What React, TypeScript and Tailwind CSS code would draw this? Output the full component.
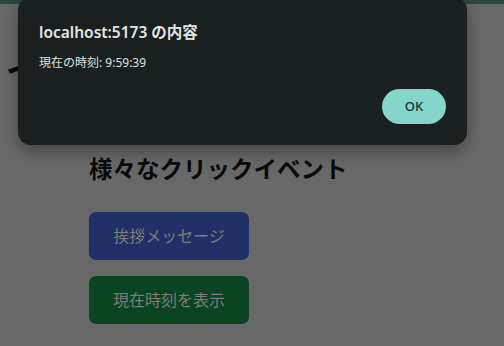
export default function App() {
  return (
    <div
      className="relative h-[346px] w-[504px] overflow-hidden bg-[#686868]"
      style={{ fontFamily: '"Noto Sans", "Noto Sans CJK JP", sans-serif' }}
    >
      {/* dimmed page */}
      <div className="h-[4px] w-full bg-[#2c4643]" />
      <div className="px-[6px] pt-[50px]">
        <h1 className="whitespace-nowrap text-[32px] font-bold leading-none text-[#080808]">
          イベントハンドリング
        </h1>
      </div>
      <div className="mt-[69px] flex flex-col items-start gap-[16px] pl-[89px]">
        <h2 className="mb-[13px] text-[23.5px] font-bold leading-[28px] text-[#0a0a0a]">
          様々なクリックイベント
        </h2>
        <button className="h-[48px] w-[160px] rounded-[7px] bg-[#213066] text-[16px] text-[#7c7c7c]">
          挨拶メッセージ
        </button>
        <button className="h-[48px] w-[160px] rounded-[7px] bg-[#0b4423] text-[16px] text-[#7c7c7c]">
          現在時刻を表示
        </button>
      </div>

      {/* alert dialog */}
      <div className="absolute left-[18px] top-[-3px] flex h-[148px] w-[449px] flex-col rounded-[13px] bg-[#1a1f1f] px-[21px] pt-[25px] pb-[21px] shadow-[0_6px_16px_rgba(0,0,0,0.35)]">
        <div className="text-[15.5px] font-semibold leading-[20px] text-[#e4e6e6]">
          localhost:5173 の内容
        </div>
        <div className="mt-[13px] text-[12px] leading-[16px] text-[#dfe2e2]">
          現在の時刻: 9:59:39
        </div>
        <div className="mt-auto flex justify-end">
          <button className="h-[35px] w-[64px] rounded-full bg-[#84d6cb] text-[13px] font-medium text-[#15302c]">
            OK
          </button>
        </div>
      </div>
    </div>
  );
}
